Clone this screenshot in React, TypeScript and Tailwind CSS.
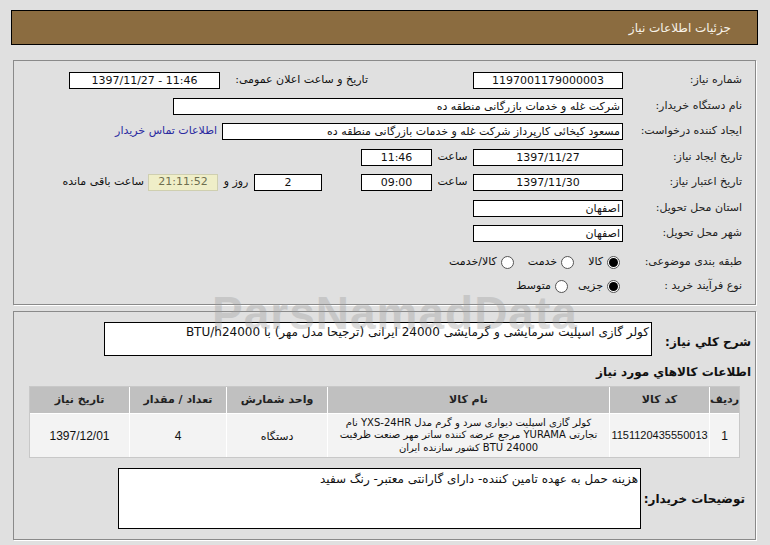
import React from "react";

const Input = ({
  w,
  children,
  align = "center",
}: {
  w: string;
  children?: React.ReactNode;
  align?: "center" | "right";
}) => (
  <div
    className={`${w} h-[17px] bg-white border border-black flex items-center leading-none whitespace-nowrap overflow-hidden ${
      align === "center" ? "justify-center" : "justify-start pr-[2px]"
    }`}
  >
    {children}
  </div>
);

const Label = ({ children }: { children: React.ReactNode }) => (
  <div className="w-[132px] shrink-0 pr-[13px] text-right whitespace-nowrap text-[#222]">{children}</div>
);

const Radio = ({ checked }: { checked?: boolean }) => (
  <span className="w-[13px] h-[13px] rounded-full border border-[#555] bg-white flex items-center justify-center shrink-0">
    {checked && <span className="w-[9px] h-[9px] rounded-full bg-black" />}
  </span>
);

const Cell = ({ children, className = "" }: { children: React.ReactNode; className?: string }) => (
  <div className={`bg-[#f3f3f3] flex items-center justify-center ${className}`}>{children}</div>
);

export default function App() {
  return (
    <div
      dir="rtl"
      className="relative w-[770px] h-[545px] overflow-hidden bg-[#e0e0e0] text-[11px] text-[#111] font-['DejaVu_Sans',sans-serif]"
    >
      <div className="pt-[10px] pl-[11px] pr-[12px]">
        {/* Header */}
        <div className="h-[35px] bg-[#8b6c40] border border-black flex items-center pr-[26px] text-[12px] text-[#f7f2e8]">
          جزئیات اطلاعات نیاز
        </div>

        {/* Panel 1 */}
        <div className="mx-[2px] mt-[15px] h-[245px] border border-[#8a8a8a] shadow-[1px_1px_0_#ffffff] pt-[11px] flex flex-col">
          <div className="flex flex-col gap-[8.5px]">
            <div className="flex items-center h-[17px]">
              <Label>شماره نیاز:</Label>
              <Input w="w-[150px]">1197001179000003</Input>
              <div className="w-[105px]" />
              <div className="w-[144px] text-right whitespace-nowrap">تاریخ و ساعت اعلان عمومی:</div>
              <div className="w-[4px]" />
              <Input w="w-[151px]">
                <span dir="ltr">1397/11/27 - 11:46</span>
              </Input>
            </div>
            <div className="flex items-center h-[17px]">
              <Label>نام دستگاه خریدار:</Label>
              <Input w="w-[450px]" align="right">
                شرکت غله و خدمات بازرگانی منطقه ده
              </Input>
            </div>
            <div className="flex items-center h-[17px]">
              <Label>ایجاد کننده درخواست:</Label>
              <Input w="w-[401px]" align="right">
                مسعود کیخائی کارپرداز شرکت غله و خدمات بازرگانی منطقه ده
              </Input>
              <span className="mr-[5px] text-[#2a2aa0] whitespace-nowrap">اطلاعات تماس خریدار</span>
            </div>
            <div className="flex items-center h-[17px]">
              <Label>تاریخ ایجاد نیاز:</Label>
              <Input w="w-[150px]">1397/11/27</Input>
              <div className="w-[41px] text-center">ساعت</div>
              <Input w="w-[71px]">11:46</Input>
            </div>
            <div className="flex items-center h-[17px]">
              <Label>تاریخ اعتبار نیاز:</Label>
              <Input w="w-[150px]">1397/11/30</Input>
              <div className="w-[41px] text-center">ساعت</div>
              <Input w="w-[71px]">09:00</Input>
              <div className="w-[39px]" />
              <Input w="w-[68px]">2</Input>
              <div className="w-[36px] text-center whitespace-nowrap">روز و</div>
              <div className="w-[70px] h-[17px] bg-[#efeec8] border border-[#cfcfb0] flex items-center justify-center text-[#6e6e50]">
                21:11:52
              </div>
              <span className="mr-[4px] whitespace-nowrap">ساعت باقی مانده</span>
            </div>
            <div className="flex items-center h-[17px]">
              <Label>استان محل تحویل:</Label>
              <Input w="w-[150px]" align="right">
                اصفهان
              </Input>
            </div>
            <div className="flex items-center h-[17px]">
              <Label>شهر محل تحویل:</Label>
              <Input w="w-[150px]" align="right">
                اصفهان
              </Input>
            </div>
          </div>
          <div className="flex items-center h-[17px] mt-[12px]">
            <Label>طبقه بندی موضوعی:</Label>
            <div className="flex items-center gap-[4px] mr-[3px]">
              <Radio checked />
              <span>کالا</span>
            </div>
            <div className="flex items-center gap-[4px] mr-[14px]">
              <Radio />
              <span>خدمت</span>
            </div>
            <div className="flex items-center gap-[4px] mr-[14px]">
              <Radio />
              <span>کالا/خدمت</span>
            </div>
          </div>
          <div className="flex items-center h-[17px] mt-[7px]">
            <Label>نوع فرآیند خرید :</Label>
            <div className="flex items-center gap-[4px] mr-[3px]">
              <Radio checked />
              <span>جزیی</span>
            </div>
            <div className="flex items-center gap-[4px] mr-[10px]">
              <Radio />
              <span>متوسط</span>
            </div>
          </div>
        </div>

        {/* Panel 2 */}
        <div className="mx-[2px] mt-[6px] h-[229px] border border-[#8a8a8a] shadow-[1px_1px_0_#ffffff] pt-[10px] flex flex-col">
          <div className="flex items-center">
            <div className="w-[103px] shrink-0 pr-[4px] pt-[6px] text-right font-bold text-[12px] whitespace-nowrap">
              شرح کلي نياز:
            </div>
            <div className="w-[548px] h-[34px] bg-white border border-black pr-[2px] pt-[1px] text-[12px] leading-[16px] text-right whitespace-nowrap overflow-hidden">
              کولر گازی اسپلیت سرمایشی و گرمایشی 24000 ایرانی (ترجیحا مدل مهر) با BTU/h24000
            </div>
          </div>
          <div className="mt-[7px] pr-[4px] font-bold text-[12px] leading-[18px]">اطلاعات كالاهاي مورد نياز</div>
          <div className="mr-[15px] mt-[5px] w-[711px] bg-white border border-[#c8c8c8] grid grid-cols-[29px_99px_281px_100px_96px_99px] grid-rows-[26px_43px] gap-[1px]">
            {["ردیف", "کد کالا", "نام کالا", "واحد شمارش", "تعداد / مقدار", "تاریخ نیاز"].map((h) => (
              <div key={h} className="bg-[#c0c0c0] flex items-center justify-center font-bold text-[11px] text-[#222] whitespace-nowrap">
                {h}
              </div>
            ))}
            <Cell className="text-[12px] font-['Liberation_Sans',sans-serif]">1</Cell>
            <Cell className="text-[11px] font-['Liberation_Sans',sans-serif]">1151120435550013</Cell>
            <Cell className="text-center text-[10px] leading-[12.5px] whitespace-nowrap">
              <div>
                <div>کولر گازی اسپلیت دیواری سرد و گرم مدل YXS-24HR نام</div>
                <div>تجارتی YURAMA مرجع عرضه کننده ساتر مهر صنعت ظرفیت</div>
                <div>24000 BTU کشور سازنده ایران</div>
              </div>
            </Cell>
            <Cell className="pt-[4px] text-[11px]">دستگاه</Cell>
            <Cell className="text-[12px] font-['Liberation_Sans',sans-serif]">4</Cell>
            <Cell className="text-[12px] font-['Liberation_Sans',sans-serif]">1397/12/01</Cell>
          </div>
          <div className="flex items-center mt-[10px]">
            <div className="w-[114px] shrink-0 pr-[10px] text-right font-bold text-[12px] whitespace-nowrap">
              توضیحات خریدار:
            </div>
            <div className="w-[523px] h-[61px] bg-white border border-black pr-[2px] pt-[2px] text-[12px] leading-[16px] text-right">
              هزینه حمل به عهده تامین کننده- دارای گارانتی معتبر- رنگ سفید
            </div>
          </div>
        </div>
      </div>

      {/* Watermark overlay */}
      <div
        dir="ltr"
        className="pointer-events-none absolute left-[212px] top-[290px] text-[46px] leading-none font-bold text-[#9a9a9a] opacity-35 font-['Liberation_Sans',sans-serif] tracking-[1px]"
      >
        ParsNamadData
      </div>
    </div>
  );
}
